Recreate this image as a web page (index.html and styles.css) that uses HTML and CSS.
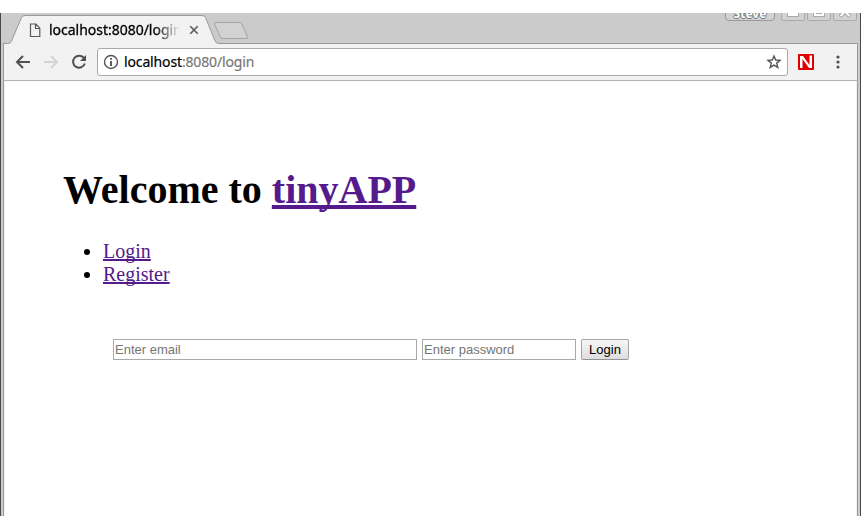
FILE: index.html
```html
<!DOCTYPE html>
<html lang="en">
<head>
<meta charset="utf-8">
<title>tinyAPP</title>
<link rel="stylesheet" href="styles.css">
</head>
<body>
<div class="window">
  <div class="titlebar">
    <svg class="tab-shape" width="250" height="31" viewBox="0 0 250 31">
      <path d="M3 30.5H7.500Q10.500 30.500 11.500 28L21.500 4.500Q22.500 2.500 25 2.500H202Q204.500 2.500 205.500 4.500L215 28Q216 30.500 219 30.500V31H3Z" fill="#f2f2f2"/>
      <path d="M3 30.5H7.500Q10.500 30.500 11.500 28L21.500 4.500Q22.500 2.500 25 2.500H202Q204.500 2.500 205.500 4.500L215 28Q216 30.500 219 30.500H250" fill="none" stroke="#999"/>
      <path d="M216 9.500H239.500Q241.500 9.500 242 11L247.500 24Q248 25.500 246 25.500H223Q221 25.500 220.300 24L214.500 11Q214 9.500 216 9.500Z" fill="#d2d2d2" stroke="#a4a4a4"/>
    </svg>
    <div class="tab">
      <svg class="file-icon" width="12" height="15" viewBox="0 0 12 15"><path d="M1.500 1H7L10.800 5.200V13.500H1.500ZM6.500 1V5.500H10.800" fill="none" stroke="#5a5a5a" stroke-width="1.200"/></svg>
      <span class="tab-title">localhost:8080/login</span>
      <svg class="close" width="10" height="10" viewBox="0 0 10 10"><path d="M1.300 1.300L8.700 8.700M8.700 1.300L1.300 8.700" stroke="#5a5a5a" stroke-width="1.600"/></svg>
    </div>
    <div class="controls">
      <span class="control user">Steve</span>
      <span class="control"><svg width="24" height="20"><rect x="6.500" y="11.500" width="11" height="4" fill="#fff" stroke="#aaa"/></svg></span>
      <span class="control"><svg width="24" height="20"><rect x="6.500" y="5.500" width="11" height="10" fill="#fff" stroke="#aaa"/><rect x="9.500" y="8.500" width="5" height="4" fill="#d6d6d6" stroke="#aaa"/></svg></span>
      <span class="control"><svg width="24" height="20"><path d="M7 5.500L17 15.500M17 5.500L7 15.500" stroke="#a5a5a5" stroke-width="4"/><path d="M7.500 6L16.500 15M16.500 6L7.500 15" stroke="#fff" stroke-width="2"/></svg></span>
    </div>
  </div>
  <div class="toolbar">
    <svg class="nav" width="16" height="16" viewBox="0 0 16 16"><path d="M15 8H2M8 2L2 8L8 14" fill="none" stroke="#505050" stroke-width="2"/></svg>
    <svg class="nav" width="16" height="16" viewBox="0 0 16 16"><path d="M1 8H14M8 2L14 8L8 14" fill="none" stroke="#d4d4d4" stroke-width="2"/></svg>
    <svg class="nav" width="16" height="16" viewBox="0 0 16 16"><path d="M13 4.200A6 6 0 1 0 13.800 9.500" fill="none" stroke="#505050" stroke-width="2"/><path d="M15 1V7H9Z" fill="#505050"/></svg>
    <div class="omnibox">
      <svg class="info" width="16" height="16" viewBox="0 0 16 16"><circle cx="8" cy="8" r="6.500" fill="none" stroke="#555" stroke-width="1.400"/><path d="M8 7V12M8 4V5.700" stroke="#555" stroke-width="1.900"/></svg>
      <span class="url">localhost<span class="path">:8080/login</span></span>
      <svg class="star" width="16" height="16" viewBox="0 0 16 16"><path d="M8 2L9.700 6L14 6.300L10.700 9.100L11.800 13.400L8 11.100L4.200 13.400L5.300 9.100L2 6.300L6.300 6Z" fill="none" stroke="#555" stroke-width="1.400"/></svg>
    </div>
    <svg class="ext" width="16" height="16" viewBox="0 0 16 16"><rect width="16" height="16" rx="1" fill="#e00000"/><path d="M2 14V2H5L11.500 11V1.500H14V14H11L4.500 5V14Z" fill="#fff"/></svg>
    <svg class="menu" width="4" height="14" viewBox="0 0 4 14"><g fill="#505050"><circle cx="2" cy="2" r="1.600"/><circle cx="2" cy="7" r="1.600"/><circle cx="2" cy="12" r="1.600"/></g></svg>
  </div>
  <main class="page">
    <h1>Welcome to <a href="#">tinyAPP</a></h1>
    <ul>
      <li><a href="#">Login</a></li>
      <li><a href="#">Register</a></li>
    </ul>
    <form>
      <input class="email" type="email" placeholder="Enter email">
      <input class="password" type="password" placeholder="Enter password">
      <button type="button">Login</button>
    </form>
  </main>
</div>
</body>
</html>
```
FILE: styles.css
```css
* { box-sizing: border-box; }
body { margin: 0; background: #fff; overflow: hidden; }
.window {
  position: relative;
  display: flex;
  flex-direction: column;
  width: 861px;
  height: 503px;
  margin-top: 13px;
  border: solid #484848;
  border-width: 0 1px;
  background: #cbcbcb;
}
.titlebar {
  position: relative;
  display: flex;
  justify-content: space-between;
  height: 31px;
  margin: 0 2px;
  border-bottom: 1px solid #999;
  font-family: "Noto Sans", sans-serif;
}
.tab-shape { position: absolute; left: -3px; top: 0; }
.tab {
  position: relative;
  display: flex;
  align-items: center;
  padding: 4px 0 0 26px;
}
.tab-title {
  width: 132px;
  margin-left: 8px;
  overflow: hidden;
  white-space: nowrap;
  font-size: 14px;
  line-height: 20px;
  letter-spacing: -0.02px;
  color: #000;
  -webkit-text-stroke: 0.3px;
  -webkit-mask-image: linear-gradient(to right, #000 105px, transparent 131px);
  mask-image: linear-gradient(to right, #000 105px, transparent 131px);
}
.close { margin-left: 8px; }
.controls { display: flex; gap: 2px; height: 8px; margin-right: 1px; overflow: hidden; }
.control {
  flex: none;
  width: 24px;
  height: 20px;
  margin-top: -12px;
  border: 1px solid #aaa;
  border-radius: 2px;
  background: #d2d2d2;
}
.control svg { display: block; margin: -1px; }
.user {
  width: 50px;
  margin-right: 4px;
  border-color: #999;
  border-radius: 4px;
  text-align: center;
  font-size: 12px;
  font-weight: 700;
  line-height: 23px;
  color: #fff;
  text-shadow: 1px 0 #777, -1px 0 #777, 0 1px #777, 0 -1px #777;
}
.toolbar {
  display: flex;
  align-items: center;
  height: 37px;
  margin: 0 2px;
  padding-left: 11px;
  border: 1px solid #999;
  border-width: 0 1px 0 1px;
  border-bottom: 1px solid #b3b3b3;
  background: #f2f2f2;
}
.nav { margin-right: 12px; flex: none; }
.omnibox {
  display: flex;
  align-items: center;
  width: 691px;
  height: 28px;
  margin-left: -2px;
  padding: 0 5px;
  border: 1px solid #aaa;
  border-radius: 3px;
  background: #fff;
}
.url {
  flex: 1;
  margin-left: 5px;
  font: 14px/20px "Noto Sans", sans-serif;
  letter-spacing: -0.14px;
  color: #000;
  -webkit-text-stroke: 0.2px;
}
.path { color: #777; }
.ext { margin-left: 10px; }
.menu { margin-left: 22px; }
.page {
  flex: 1;
  margin: 0 2px;
  padding: 86px 60px 0 59px;
  border: solid #999;
  border-width: 0 1px;
  background: #fff;
  box-shadow: inset 1px 0 #f2f2f2, inset -1px 0 #f2f2f2;
  font: 20px/23px "Liberation Serif", serif;
  color: #000;
}
h1 { margin: 0; font-size: 40px; line-height: 46px; }
a { color: #551a8b; text-decoration: underline; text-decoration-skip-ink: none; }
ul { margin: 27px 0 0; padding-left: 40px; }
form { display: flex; gap: 5px; margin: 53px 0 0 50px; }
input, button {
  height: 21px;
  font: 13px "Liberation Sans", sans-serif;
}
input {
  padding: 1px;
  border: 1px solid #a9a9a9;
  background: #fff;
}
input::placeholder { color: #757575; }
.email { width: 304px; }
.password { width: 154px; }
button {
  width: 48px;
  padding: 0;
  border: 1px solid #a5a5a5;
  border-bottom-color: #949494;
  border-radius: 2px;
  background: linear-gradient(#f6f6f6, #dedede);
  color: #000;
}
```
